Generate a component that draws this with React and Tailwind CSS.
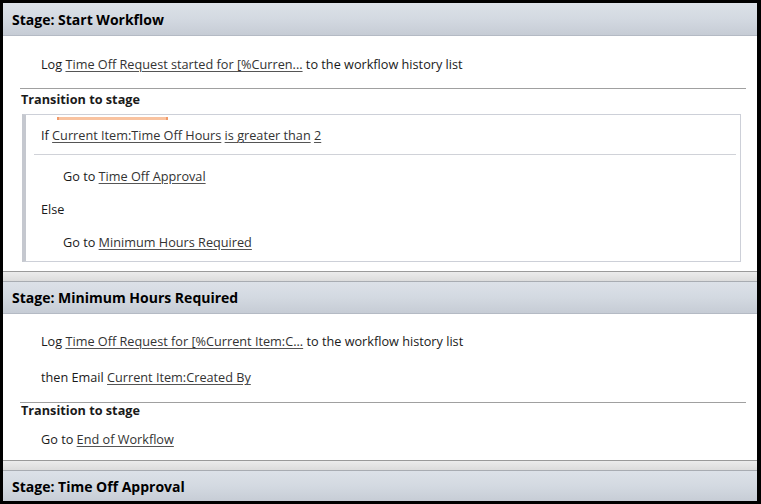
import React from 'react';

const Link = ({ children }) => (
    <span className="underline decoration-[#555] underline-offset-2 text-[#333]">{children}</span>
);

const StageHeader = ({ title, tall }) => (
    <div className={`${tall ? 'h-[33px]' : 'h-[32px]'} shrink-0 flex items-center pl-[9px] bg-gradient-to-b from-[#dce1e8] via-[#d3d9e1] to-[#c6ccd5] border-b border-[#b4bac4]`}>
        <span className="font-bold text-[14px] text-black">{title}</span>
    </div>
);

const StageGap = () => (
    <div className="h-[11px] shrink-0 border-t border-[#9a9a9a] border-b border-b-[#a8acb2] bg-gradient-to-b from-[#ececec] to-[#dcdcdc]" />
);

const Row = ({ indent, className = '', children }) => (
    <div className={`h-[20px] flex items-center ${indent} ${className}`}>
        <span className="whitespace-pre">{children}</span>
    </div>
);

const App = () => {
    return (
        <div
            className="w-[761px] h-[504px] bg-black pt-[3px] pl-[3px] pr-[4px] pb-[3px] text-[12.7px] text-[#1a1a1a]"
            style={{ fontFamily: '"Open Sans", "Noto Sans", sans-serif' }}
        >
            <div className="h-full flex flex-col bg-white overflow-hidden">
                <StageHeader title="Stage: Start Workflow" tall />
                <div className="h-[235px] shrink-0 flex flex-col pt-[19px]">
                    <Row indent="pl-[38px]">
                        Log <Link>Time Off Request started for [%Curren...</Link> to the workflow history list
                    </Row>
                    <div className="mt-[13px] ml-[17px] mr-[11px] h-px bg-[#a0a0a0]" />
                    <div className="mt-[3px] h-[16px] flex items-center pl-[18px] font-bold">Transition to stage</div>
                    <div className="relative mt-[6px] ml-[19px] mr-[16px] h-[148px] border border-[#cdd0d8] border-l-[4px] border-l-[#c5c8cf] pt-[11px]">
                        <div className="absolute top-[2px] left-[31px] w-[111px] h-[3px] bg-[#f9c3a0] flex justify-between">
                            <div className="w-[2px] h-[3px] bg-[#f19a6a]" />
                            <div className="w-[2px] h-[3px] bg-[#f19a6a]" />
                        </div>
                        <Row indent="pl-[15px]">
                            If <Link>Current Item:Time Off Hours</Link> <Link>is greater than</Link> <Link>2</Link>
                        </Row>
                        <div className="mt-[8px] ml-[8px] mr-[4px] h-px bg-[#d0d2d8]" />
                        <Row indent="pl-[37px]" className="mt-[12px]">
                            Go to <Link>Time Off Approval</Link>
                        </Row>
                        <Row indent="pl-[15px]" className="mt-[13px]">Else</Row>
                        <Row indent="pl-[37px]" className="mt-[13px]">
                            Go to <Link>Minimum Hours Required</Link>
                        </Row>
                    </div>
                </div>
                <StageGap />
                <StageHeader title="Stage: Minimum Hours Required" />
                <div className="h-[146px] shrink-0 flex flex-col pt-[18px]">
                    <Row indent="pl-[38px]">
                        Log <Link>Time Off Request for [%Current Item:C...</Link> to the workflow history list
                    </Row>
                    <Row indent="pl-[38px]" className="mt-[16px]">
                        then Email <Link>Current Item:Created By</Link>
                    </Row>
                    <div className="mt-[14px] ml-[17px] mr-[11px] h-px bg-[#a0a0a0]" />
                    <div className="h-[16px] flex items-center pl-[18px] font-bold">Transition to stage</div>
                    <Row indent="pl-[38px]" className="mt-[11px]">
                        Go to <Link>End of Workflow</Link>
                    </Row>
                </div>
                <StageGap />
                <StageHeader title="Stage: Time Off Approval" />
            </div>
        </div>
    );
};

export default App;
